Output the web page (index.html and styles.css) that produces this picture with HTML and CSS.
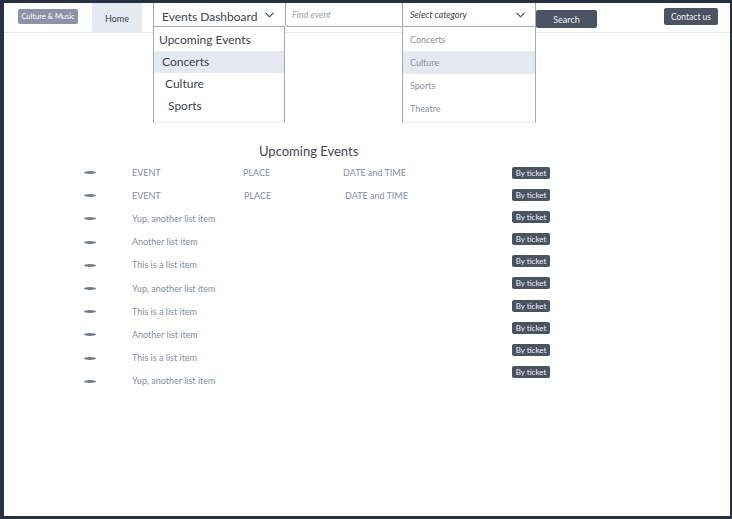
FILE: index.html
```html
<!DOCTYPE html>
<html lang="en">
<head>
<meta charset="utf-8">
<title>Events Dashboard</title>
<link rel="stylesheet" href="styles.css">
</head>
<body>
<div class="app">
  <nav class="nav">
    <span class="brand">Culture &amp; Music</span>
    <a class="tab">Home</a>
    <div class="dd">
      <div class="dd-trigger">
        <span>Events Dashboard</span>
        <svg class="chev" width="9" height="6" viewBox="0 0 9 6"><polyline points="0.5,0.8 4.5,4.8 8.5,0.8" fill="none" stroke="#3b4250" stroke-width="1.1"/></svg>
      </div>
      <ul class="dd-menu">
        <li>Upcoming Events</li>
        <li class="active">Concerts</li>
        <li>Culture</li>
        <li>Sports</li>
      </ul>
    </div>
    <input class="find" type="text" placeholder="Find event">
    <div class="sel">
      <div class="sel-trigger">
        <span>Select category</span>
        <svg class="chev" width="9" height="6" viewBox="0 0 9 6"><polyline points="0.5,0.8 4.5,4.8 8.5,0.8" fill="none" stroke="#3b4250" stroke-width="1.1"/></svg>
      </div>
      <ul class="sel-menu">
        <li>Concerts</li>
        <li class="active">Culture</li>
        <li>Sports</li>
        <li>Theatre</li>
      </ul>
    </div>
    <button class="btn search">Search</button>
    <button class="btn contact">Contact us</button>
  </nav>
  <main class="main">
    <h2 class="title">Upcoming Events</h2>
    <div class="events">
      <ul class="list">
        <li class="row"><span class="bullet"></span><span>EVENT</span><span>PLACE</span><span>DATE and TIME</span></li>
        <li class="row alt"><span class="bullet"></span><span>EVENT</span><span class="place">PLACE</span><span class="date">DATE and TIME</span></li>
        <li class="row"><span class="bullet"></span><span>Yup, another list item</span></li>
        <li class="row"><span class="bullet"></span><span>Another list item</span></li>
        <li class="row"><span class="bullet"></span><span>This is a list item</span></li>
        <li class="row"><span class="bullet"></span><span>Yup, another list item</span></li>
        <li class="row"><span class="bullet"></span><span>This is a list item</span></li>
        <li class="row"><span class="bullet"></span><span>Another list item</span></li>
        <li class="row"><span class="bullet"></span><span>This is a list item</span></li>
        <li class="row"><span class="bullet"></span><span>Yup, another list item</span></li>
      </ul>
      <div class="tickets">
        <button class="ticket">By ticket</button>
        <button class="ticket">By ticket</button>
        <button class="ticket">By ticket</button>
        <button class="ticket">By ticket</button>
        <button class="ticket">By ticket</button>
        <button class="ticket">By ticket</button>
        <button class="ticket">By ticket</button>
        <button class="ticket">By ticket</button>
        <button class="ticket">By ticket</button>
        <button class="ticket">By ticket</button>
      </div>
    </div>
  </main>
</div>
</body>
</html>
```

FILE: styles.css
```css
* { box-sizing: border-box; }

html, body { margin: 0; }

body {
  background: #263142;
  padding: 3px 2px 3px 4px;
  font-family: Lato, "Open Sans", "Liberation Sans", sans-serif;
}

.app {
  background: #ffffff;
  height: 513px;
  overflow: hidden;
}

/* ---------- navbar ---------- */
.nav {
  display: flex;
  align-items: flex-start;
  height: 30px;
  border-bottom: 1px solid #e4e8ee;
}

.brand {
  margin: 6px 0 0 14px;
  width: 60px;
  height: 15px;
  background: #8a94a6;
  color: #ffffff;
  border-radius: 2px;
  font-size: 7.5px;
  display: flex;
  align-items: center;
  justify-content: center;
}

.tab {
  margin-left: 14px;
  width: 50px;
  height: 29px;
  background: #e5e9f0;
  color: #3b4250;
  font-size: 9px;
  display: flex;
  align-items: center;
  justify-content: center;
  padding-top: 1px;
}

.dd {
  position: relative;
  margin-left: 11px;
  width: 132px;
}

.dd-trigger {
  height: 24px;
  border-left: 1px solid #a3aab6;
  border-bottom: 1px solid #a3aab6;
  display: flex;
  align-items: center;
  justify-content: space-between;
  padding: 4px 11px 0 8px;
  font-size: 12px;
  color: #3b4250;
}

.chev { display: block; margin-top: -3px; }

.dd-menu {
  position: absolute;
  top: 24px;
  left: 0;
  width: 132px;
  height: 96px;
  margin: 0;
  padding: 2px 0 0;
  list-style: none;
  background: #ffffff;
  border-left: 1px solid #a3aab6;
  border-right: 1px solid #a3aab6;
  border-bottom: 1px solid #eceef2;
  z-index: 2;
}

.dd-menu li {
  height: 22px;
  line-height: 22px;
  font-size: 12px;
  color: #3b4250;
}

.dd-menu li:nth-child(1) { padding-left: 5px; }
.dd-menu li:nth-child(2) { padding-left: 8px; }
.dd-menu li:nth-child(3) { padding-left: 11px; }
.dd-menu li:nth-child(4) { padding-left: 14px; }

.dd-menu li.active,
.sel-menu li.active { background: #e4e8f0; }

.find {
  width: 117px;
  height: 24px;
  margin: 0;
  border: none;
  border-left: 1px solid #a3aab6;
  border-bottom: 1px solid #a3aab6;
  border-bottom-left-radius: 3px;
  padding: 0 0 0 6px;
  font-family: inherit;
  font-style: italic;
  font-size: 9px;
  color: #3b4250;
  outline: none;
  background: #ffffff;
}

.find::placeholder { color: #9aa3b2; }

.sel {
  position: relative;
  width: 134px;
}

.sel-trigger {
  height: 24px;
  border-left: 1px solid #a3aab6;
  border-right: 1px solid #a3aab6;
  border-bottom: 1px solid #a3aab6;
  display: flex;
  align-items: center;
  justify-content: space-between;
  padding: 0 10px 1px 7px;
  font-size: 9px;
  font-style: italic;
  color: #3b4250;
}

.sel-trigger .chev { margin-top: 2px; }

.sel-menu {
  position: absolute;
  top: 24px;
  left: 0;
  width: 134px;
  height: 96px;
  margin: 0;
  padding: 1px 0 0;
  list-style: none;
  background: #ffffff;
  border-left: 1px solid #a3aab6;
  border-right: 1px solid #a3aab6;
  border-bottom: 1px solid #eceef2;
  z-index: 2;
}

.sel-menu li {
  height: 23px;
  line-height: 23px;
  padding-left: 7px;
  font-size: 9px;
  color: #8a94a6;
}

.btn {
  border: none;
  border-radius: 2px;
  background: #4a5361;
  color: #f1f3f6;
  font-family: inherit;
  padding: 0;
}

.search {
  margin-top: 7px;
  width: 61px;
  height: 18px;
  font-size: 9px;
}

.contact {
  margin: 5px 12px 0 auto;
  width: 54px;
  height: 17px;
  font-size: 8.5px;
}

/* ---------- main ---------- */
.main { padding: 0; }

.title {
  margin: 110px 0 0 255px;
  font-size: 13px;
  line-height: 16px;
  font-weight: 400;
  color: #3f4655;
}

.events { display: flex; }

.list {
  width: 428px;
  margin: 1.5px 0 0 80px;
  padding: 0;
  list-style: none;
}

.row {
  display: grid;
  grid-template-columns: 48px 111px 100px 1fr;
  align-items: center;
  height: 23.2px;
  font-size: 9px;
  color: #8290a6;
}

.row.alt .place { padding-left: 1px; }
.row.alt .date { padding-left: 2px; }

.bullet {
  display: block;
  width: 12px;
  height: 3px;
  border-radius: 50%;
  background: #6b7a90;
  margin-top: 1px;
}

.tickets {
  display: flex;
  flex-direction: column;
  gap: 10.1px;
  padding-top: 8px;
}

.ticket {
  width: 38px;
  height: 12px;
  padding: 0;
  border: none;
  border-radius: 2px;
  background: #4a5361;
  color: #eef0f3;
  font-family: inherit;
  font-size: 8px;
  line-height: 12px;
}
```
